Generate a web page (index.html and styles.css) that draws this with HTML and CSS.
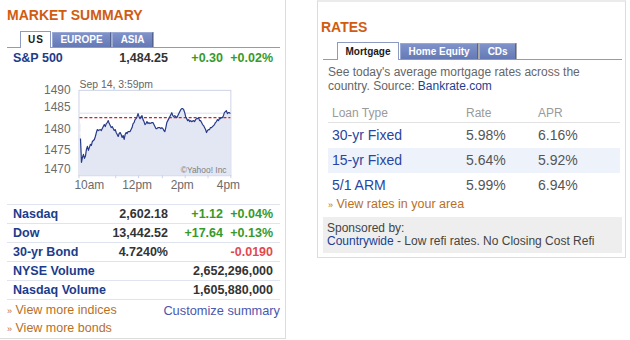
FILE: index.html
```html
<!DOCTYPE html>
<html>
<head>
<meta charset="utf-8">
<link rel="stylesheet" href="styles.css">
</head>
<body>
<div class="page">
  <section class="market">
    <h2 class="title">MARKET SUMMARY</h2>
    <div class="tabs">
      <span class="tab active us">US</span><span class="tab">EUROPE</span><span class="tab">ASIA</span>
    </div>
    <div class="row lead"><span class="name">S&amp;P 500</span><span class="val">1,484.25</span><span class="chg up">+0.30</span><span class="pct up">+0.02%</span></div>
    <svg class="chart" width="273" height="137" viewBox="7 68 273 137">
      <text class="stamp" x="79" y="88.5">Sep 14, 3:59pm</text>
      <text class="axis" x="70" y="94.5" text-anchor="end">1490</text>
      <text class="axis" x="70" y="111.5" text-anchor="end">1485</text>
      <text class="axis" x="70" y="133.5" text-anchor="end">1480</text>
      <text class="axis" x="70" y="154.5" text-anchor="end">1475</text>
      <text class="axis" x="70" y="173.5" text-anchor="end">1470</text>
      <rect x="78.5" y="90.5" width="153" height="86" fill="#fff" stroke="#cdd3e8"/>
      <line x1="79" y1="113.5" x2="231" y2="113.5" stroke="#dde1ea"/>
      <polygon fill="#e2e7f3" points="79,176 79,124 80,124 80,139 80.5,150 81,163 82,158 83,155 84,159 85,157 86,150 87,147 88,151 89,148 90,145 91,146 92,142 94,140 95,137 96,133 97,130 98,131 100,130 101,131 103,127 104,125 105,127 106,124 107,123 108,121 109,124 110,126 111,128 112,127 113,129 114,131 115,130 116,133 117,135 118,137 119,134 120,133 121,135 122,138 123,136 124,140 125,135 126,133 127,134 128,132 130,132 131,130 132,128 133,124 134,123 135,120 136,119 137,117 138,114 139,117 140,119 141,117 142,116 143,120 144,122 145,125 146,124 147,122 148,124 149,123 150,124 152,123 153,123 154,125 155,127 156,129 157,129 158,128 160,128 161,129 162,128 163,129 164,131 165,132 166,128 167,123 168,121 169,119 170,117 171,115 172,113 173,116 174,117 175,116 176,117 177,118 178,116 179,114 180,112 181,110 182,109 183,109 184,110 185,113 186,117 187,119 188,121 189,120 190,122 191,121 192,122 194,121 195,122 196,120 197,119 198,119 199,118 200,121 201,121 202,123 203,125 204,126 205,128 206,130 207,133 208,131 209,130 210,130 211,128 212,128 213,127 214,126 215,125 216,123 217,122 218,120 219,121 220,119 221,119 222,118 223,118 224,116 225,113 226,112 227,111 228,114 229,113 230,113 231,114 231,176"/>
      <line x1="79" y1="133.5" x2="86" y2="133.5" stroke="#fff"/>
      <line x1="79" y1="118" x2="231" y2="118" stroke="#e01b1b" stroke-width="1.2" stroke-dasharray="3 2"/>
      <polyline fill="none" stroke="#26398a" stroke-width="1.2" stroke-linejoin="round" points="80,139 80.5,150 81,163 82,158 83,155 84,159 85,157 86,150 87,147 88,151 89,148 90,145 91,146 92,142 94,140 95,137 96,133 97,130 98,131 100,130 101,131 103,127 104,125 105,127 106,124 107,123 108,121 109,124 110,126 111,128 112,127 113,129 114,131 115,130 116,133 117,135 118,137 119,134 120,133 121,135 122,138 123,136 124,140 125,135 126,133 127,134 128,132 130,132 131,130 132,128 133,124 134,123 135,120 136,119 137,117 138,114 139,117 140,119 141,117 142,116 143,120 144,122 145,125 146,124 147,122 148,124 149,123 150,124 152,123 153,123 154,125 155,127 156,129 157,129 158,128 160,128 161,129 162,128 163,129 164,131 165,132 166,128 167,123 168,121 169,119 170,117 171,115 172,113 173,116 174,117 175,116 176,117 177,118 178,116 179,114 180,112 181,110 182,109 183,109 184,110 185,113 186,117 187,119 188,121 189,120 190,122 191,121 192,122 194,121 195,122 196,120 197,119 198,119 199,118 200,121 201,121 202,123 203,125 204,126 205,128 206,130 207,133 208,131 209,130 210,130 211,128 212,128 213,127 214,126 215,125 216,123 217,122 218,120 219,121 220,119 221,119 222,118 223,118 224,116 225,113 226,112 227,111 228,114 229,113 230,113 231,114"/>
      <text class="copy" x="181" y="174">©Yahoo! Inc</text>
      <g stroke="#cdd3e8">
        <line x1="78.5" y1="176" x2="78.5" y2="179"/>
        <line x1="115.5" y1="176" x2="115.5" y2="179"/>
        <line x1="138.5" y1="176" x2="138.5" y2="179"/>
        <line x1="162.5" y1="176" x2="162.5" y2="179"/>
        <line x1="185.5" y1="176" x2="185.5" y2="179"/>
        <line x1="208.5" y1="176" x2="208.5" y2="179"/>
        <line x1="231.5" y1="176" x2="231.5" y2="179"/>
      </g>
      <text class="axis" x="89" y="189.5" text-anchor="middle">10am</text>
      <text class="axis" x="137" y="189.5" text-anchor="middle">12pm</text>
      <text class="axis" x="182.5" y="189.5" text-anchor="middle">2pm</text>
      <text class="axis" x="229" y="189.5" text-anchor="middle">4pm</text>
    </svg>
    <div class="rows">
      <div class="row"><span class="name">Nasdaq</span><span class="val">2,602.18</span><span class="chg up">+1.12</span><span class="pct up">+0.04%</span></div>
      <div class="row"><span class="name">Dow</span><span class="val">13,442.52</span><span class="chg up">+17.64</span><span class="pct up">+0.13%</span></div>
      <div class="row"><span class="name">30-yr Bond</span><span class="val">4.7240%</span><span class="pct down">-0.0190</span></div>
      <div class="row"><span class="name wide">NYSE Volume</span><span class="vol">2,652,296,000</span></div>
      <div class="row"><span class="name wide">Nasdaq Volume</span><span class="vol">1,605,880,000</span></div>
    </div>
    <div class="links">
      <div class="link-line"><a class="more"><span class="raquo">»</span> View more indices</a><a class="custom">Customize summary</a></div>
      <div class="link-line"><a class="more"><span class="raquo">»</span> View more bonds</a></div>
    </div>
  </section>

  <section class="rates">
    <h2 class="title rates-title">RATES</h2>
    <div class="tabs rtabs">
      <span class="tab active">Mortgage</span><span class="tab">Home Equity</span><span class="tab">CDs</span>
    </div>
    <p class="desc">See today's average mortgage rates across the country. Source: <a class="blue">Bankrate.com</a></p>
    <div class="rtable">
      <div class="rrow head"><span>Loan Type</span><span>Rate</span><span>APR</span></div>
      <div class="rrow"><span class="loan">30-yr Fixed</span><span>5.98%</span><span>6.16%</span></div>
      <div class="rrow alt"><span class="loan">15-yr Fixed</span><span>5.64%</span><span>5.92%</span></div>
      <div class="rrow"><span class="loan">5/1 ARM</span><span>5.99%</span><span>6.94%</span></div>
    </div>
    <div class="rlink"><a class="more"><span class="raquo">»</span> View rates in your area</a></div>
    <div class="sponsor">
      <div>Sponsored by:</div>
      <div><a class="blue">Countrywide</a> - Low refi rates. No Closing Cost Refi</div>
    </div>
  </section>
</div>
</body>
</html>
```

FILE: styles.css
```css
html, body {
  margin: 0;
  padding: 0;
  background: #fff;
}
body {
  font-family: "Liberation Sans", Arial, sans-serif;
  color: #333;
}
a { text-decoration: none; cursor: pointer; }

.page {
  display: flex;
  align-items: flex-start;
  gap: 31px;
}

/* ---------- left panel ---------- */
.market {
  flex: none;
  width: 273px;
  height: 338px;
  padding: 0 5px 0 7px;
  border-right: 1px solid #dcdcdc;
  border-bottom: 1px solid #dcdcdc;
  display: flex;
  flex-direction: column;
}
.title {
  margin: 7px 0 0 0;
  font-size: 14px;
  font-weight: bold;
  line-height: 16px;
  color: #d05c12;
}

.tabs {
  display: flex;
  align-items: flex-end;
  gap: 1px;
  margin-top: 8px;
  padding-left: 13px;
  border-bottom: 1px solid #8d9bc3;
}
.tab {
  box-sizing: border-box;
  height: 15px;
  line-height: 14px;
  padding: 0 7.5px;
  font-size: 10px;
  font-weight: bold;
  color: #fff;
  background: linear-gradient(#7f92c9, #6579b6);
  border: 1px solid #9aa8d4;
  border-bottom: none;
  border-right-color: #55648f;
  box-shadow: 1px 0 0 #a9a9a9;
  white-space: nowrap;
}
.tab.active {
  height: 17px;
  line-height: 16px;
  margin-bottom: -1px;
  background: #fff;
  color: #1a1a1a;
  border-color: #8d9bc3;
  box-shadow: none;
}
.tab.us {
  letter-spacing: 1px;
  padding: 0 6px 0 7px;
}

.row {
  display: grid;
  grid-template-columns: 90px 65px 55px 50px;
  padding: 0 7px 0 6px;
  height: 18px;
  line-height: 18px;
  font-size: 12.5px;
  font-weight: bold;
  border-bottom: 1px solid #dfe4ef;
}
.row.lead {
  height: 20px;
  line-height: 20px;
  border-bottom: none;
}
.name { color: #1c3c8c; white-space: nowrap; }
.name.wide { grid-column: 1 / 3; }
.val, .chg, .pct, .vol { text-align: right; color: #333; white-space: nowrap; }
.pct { grid-column: 4; }
.vol { grid-column: 3 / 5; }
.up { color: #369a2a; }
.down { color: #df4a4f; }

.chart { display: block; }
.axis { font-family: "Liberation Sans", Arial, sans-serif; font-size: 12px; fill: #6b6b6b; }
.stamp { font-family: "Liberation Sans", Arial, sans-serif; font-size: 10.5px; fill: #666; }
.copy { font-family: "Liberation Sans", Arial, sans-serif; font-size: 8.5px; fill: #808080; }

.rows { border-top: 1px solid #dfe4ef; }

.links {
  padding-top: 2px;
  font-size: 12.5px;
  line-height: 17px;
}
.link-line {
  display: flex;
  justify-content: space-between;
}
.more { color: #b9701f; }
.raquo { font-size: 9px; }
.custom { color: #4b57ad; font-size: 12.8px; }

/* ---------- right panel ---------- */
.rates {
  flex: none;
  width: 299px;
  height: 255px;
  padding: 0 3px 0 5px;
  border: 1px solid #dcdcdc;
  border-top: 2px solid #ebebeb;
  display: flex;
  flex-direction: column;
}
.rates-title {
  margin: 17px 0 0 -2px;
}
.rtabs {
  margin-top: 7px;
  padding-left: 14px;
}
.rtabs .tab {
  height: 16px;
  line-height: 15px;
}
.rtabs .tab.active {
  height: 18px;
  line-height: 17px;
}
.desc {
  margin: 5px 0 0 5px;
  font-size: 12px;
  line-height: 14px;
  color: #666;
}
.blue { color: #1c3f92; }

.rtable {
  margin: 11px 2px 0 5px;
}
.rrow {
  display: grid;
  grid-template-columns: 134px 72px 1fr;
  padding-left: 4px;
  height: 25px;
  line-height: 25px;
  font-size: 14px;
  color: #555;
}
.rrow.head {
  height: 18px;
  line-height: 18px;
  font-size: 12px;
  color: #9a9a9a;
  border-bottom: 1px solid #e2e2e2;
}
.rrow.alt { background: #eef2fa; }
.loan { color: #2746a0; }

.rlink {
  margin-left: 5px;
  font-size: 12.5px;
  line-height: 12px;
}
.sponsor {
  margin-top: 6px;
  padding: 5px 4px;
  background: #eeeeee;
  font-size: 12px;
  line-height: 13px;
  color: #444;
}
```
